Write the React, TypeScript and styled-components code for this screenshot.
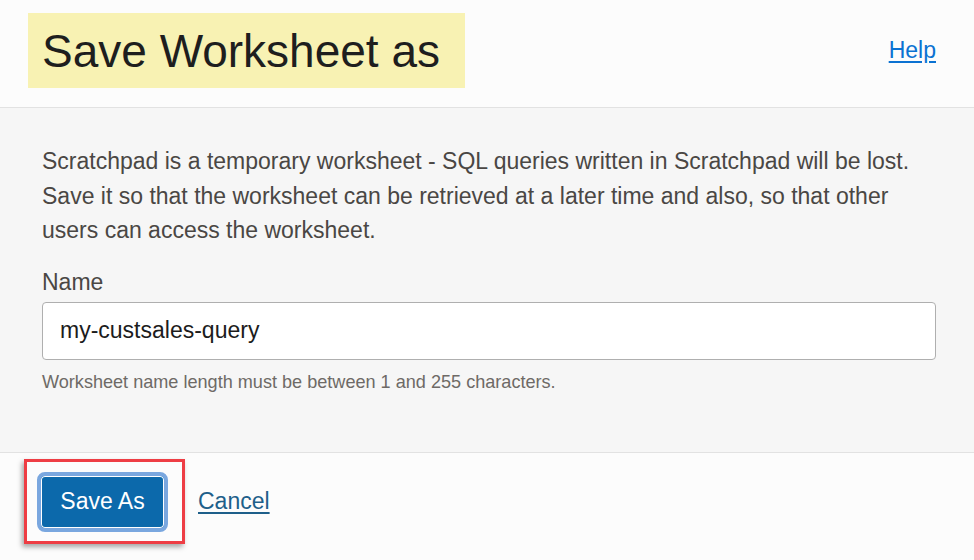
import React from "react";
import styled, { createGlobalStyle } from "styled-components";

const Global = createGlobalStyle`
  html, body { margin: 0; padding: 0; background: #fcfcfc; }
  body { font-family: "Liberation Sans", Arial, sans-serif; }
  * { box-sizing: border-box; }
`;

const Page = styled.div`
  width: 974px;
  height: 560px;
  display: flex;
  flex-direction: column;
  overflow: hidden;
`;

const Header = styled.header`
  height: 108px;
  flex: none;
  background: #fcfcfc;
  border-bottom: 1px solid #e2e2e2;
  display: flex;
  align-items: flex-start;
  justify-content: space-between;
  padding: 13px 38px 0 28px;
`;

const TitleBox = styled.div`
  width: 437px;
  height: 75px;
  background: #f8f2b3;
  display: flex;
  align-items: center;
  padding-left: 14px;
`;

const Title = styled.h1`
  margin: 0;
  font-weight: 400;
  font-size: 46px;
  color: #1e1e1e;
`;

const HelpLink = styled.a`
  margin-top: 24px;
  font-size: 23px;
  color: #0b72d2;
  text-decoration: underline;
  text-underline-offset: 3px;
  cursor: pointer;
`;

const Body = styled.main`
  height: 345px;
  flex: none;
  background: #f6f6f6;
  border-bottom: 1px solid #e2e2e2;
  padding: 36px 38px 0 42px;
`;

const Intro = styled.p`
  margin: 0;
  font-size: 23px;
  line-height: 34.5px;
  color: #4a4744;
`;

const Label = styled.label`
  display: block;
  margin-top: 19px;
  font-size: 23px;
  line-height: 30px;
  color: #4a4744;
`;

const Input = styled.input`
  display: block;
  width: 894px;
  height: 58px;
  margin-top: 5px;
  padding: 0 17px;
  border: 1px solid #afafaf;
  border-radius: 4px;
  background: #fff;
  font-family: "Liberation Sans", Arial, sans-serif;
  font-size: 23px;
  color: #1c1c1c;
  outline: none;
`;

const Hint = styled.div`
  margin-top: 12px;
  font-size: 18.1px;
  line-height: 21px;
  color: #6e6a66;
`;

const Footer = styled.footer`
  flex: 1;
  background: #fcfcfc;
  display: flex;
  align-items: flex-start;
  padding: 6px 0 0 24px;
  gap: 13px;
`;

const Highlight = styled.div`
  width: 161px;
  height: 85px;
  border: 3px solid #ee3d44;
  box-shadow: -2px 3px 5px rgba(0, 0, 0, 0.35);
  display: flex;
  align-items: center;
  padding-left: 10px;
`;

const PrimaryButton = styled.button`
  width: 131px;
  height: 60px;
  border: 4px solid #7aa7df;
  border-radius: 8px;
  background: #0c69ab;
  box-shadow: inset 0 0 0 1px #ffffff;
  color: #fff;
  font-family: "Liberation Sans", Arial, sans-serif;
  font-size: 23px;
  padding: 0;
  cursor: pointer;
`;

const CancelLink = styled.a`
  margin-top: 29px;
  font-size: 23px;
  color: #1e5f8a;
  text-decoration: underline;
  text-underline-offset: 3px;
  cursor: pointer;
`;

export default function App() {
  return (
    <>
      <Global />
      <Page>
        <Header>
          <TitleBox>
            <Title>Save Worksheet as</Title>
          </TitleBox>
          <HelpLink>Help</HelpLink>
        </Header>
        <Body>
          <Intro>
            Scratchpad is a temporary worksheet - SQL queries written in Scratchpad will be lost.
            <br />
            Save it so that the worksheet can be retrieved at a later time and also, so that other
            <br />
            users can access the worksheet.
          </Intro>
          <Label htmlFor="ws-name">Name</Label>
          <Input id="ws-name" defaultValue="my-custsales-query" />
          <Hint>Worksheet name length must be between 1 and 255 characters.</Hint>
        </Body>
        <Footer>
          <Highlight>
            <PrimaryButton>Save As</PrimaryButton>
          </Highlight>
          <CancelLink>Cancel</CancelLink>
        </Footer>
      </Page>
    </>
  );
}
